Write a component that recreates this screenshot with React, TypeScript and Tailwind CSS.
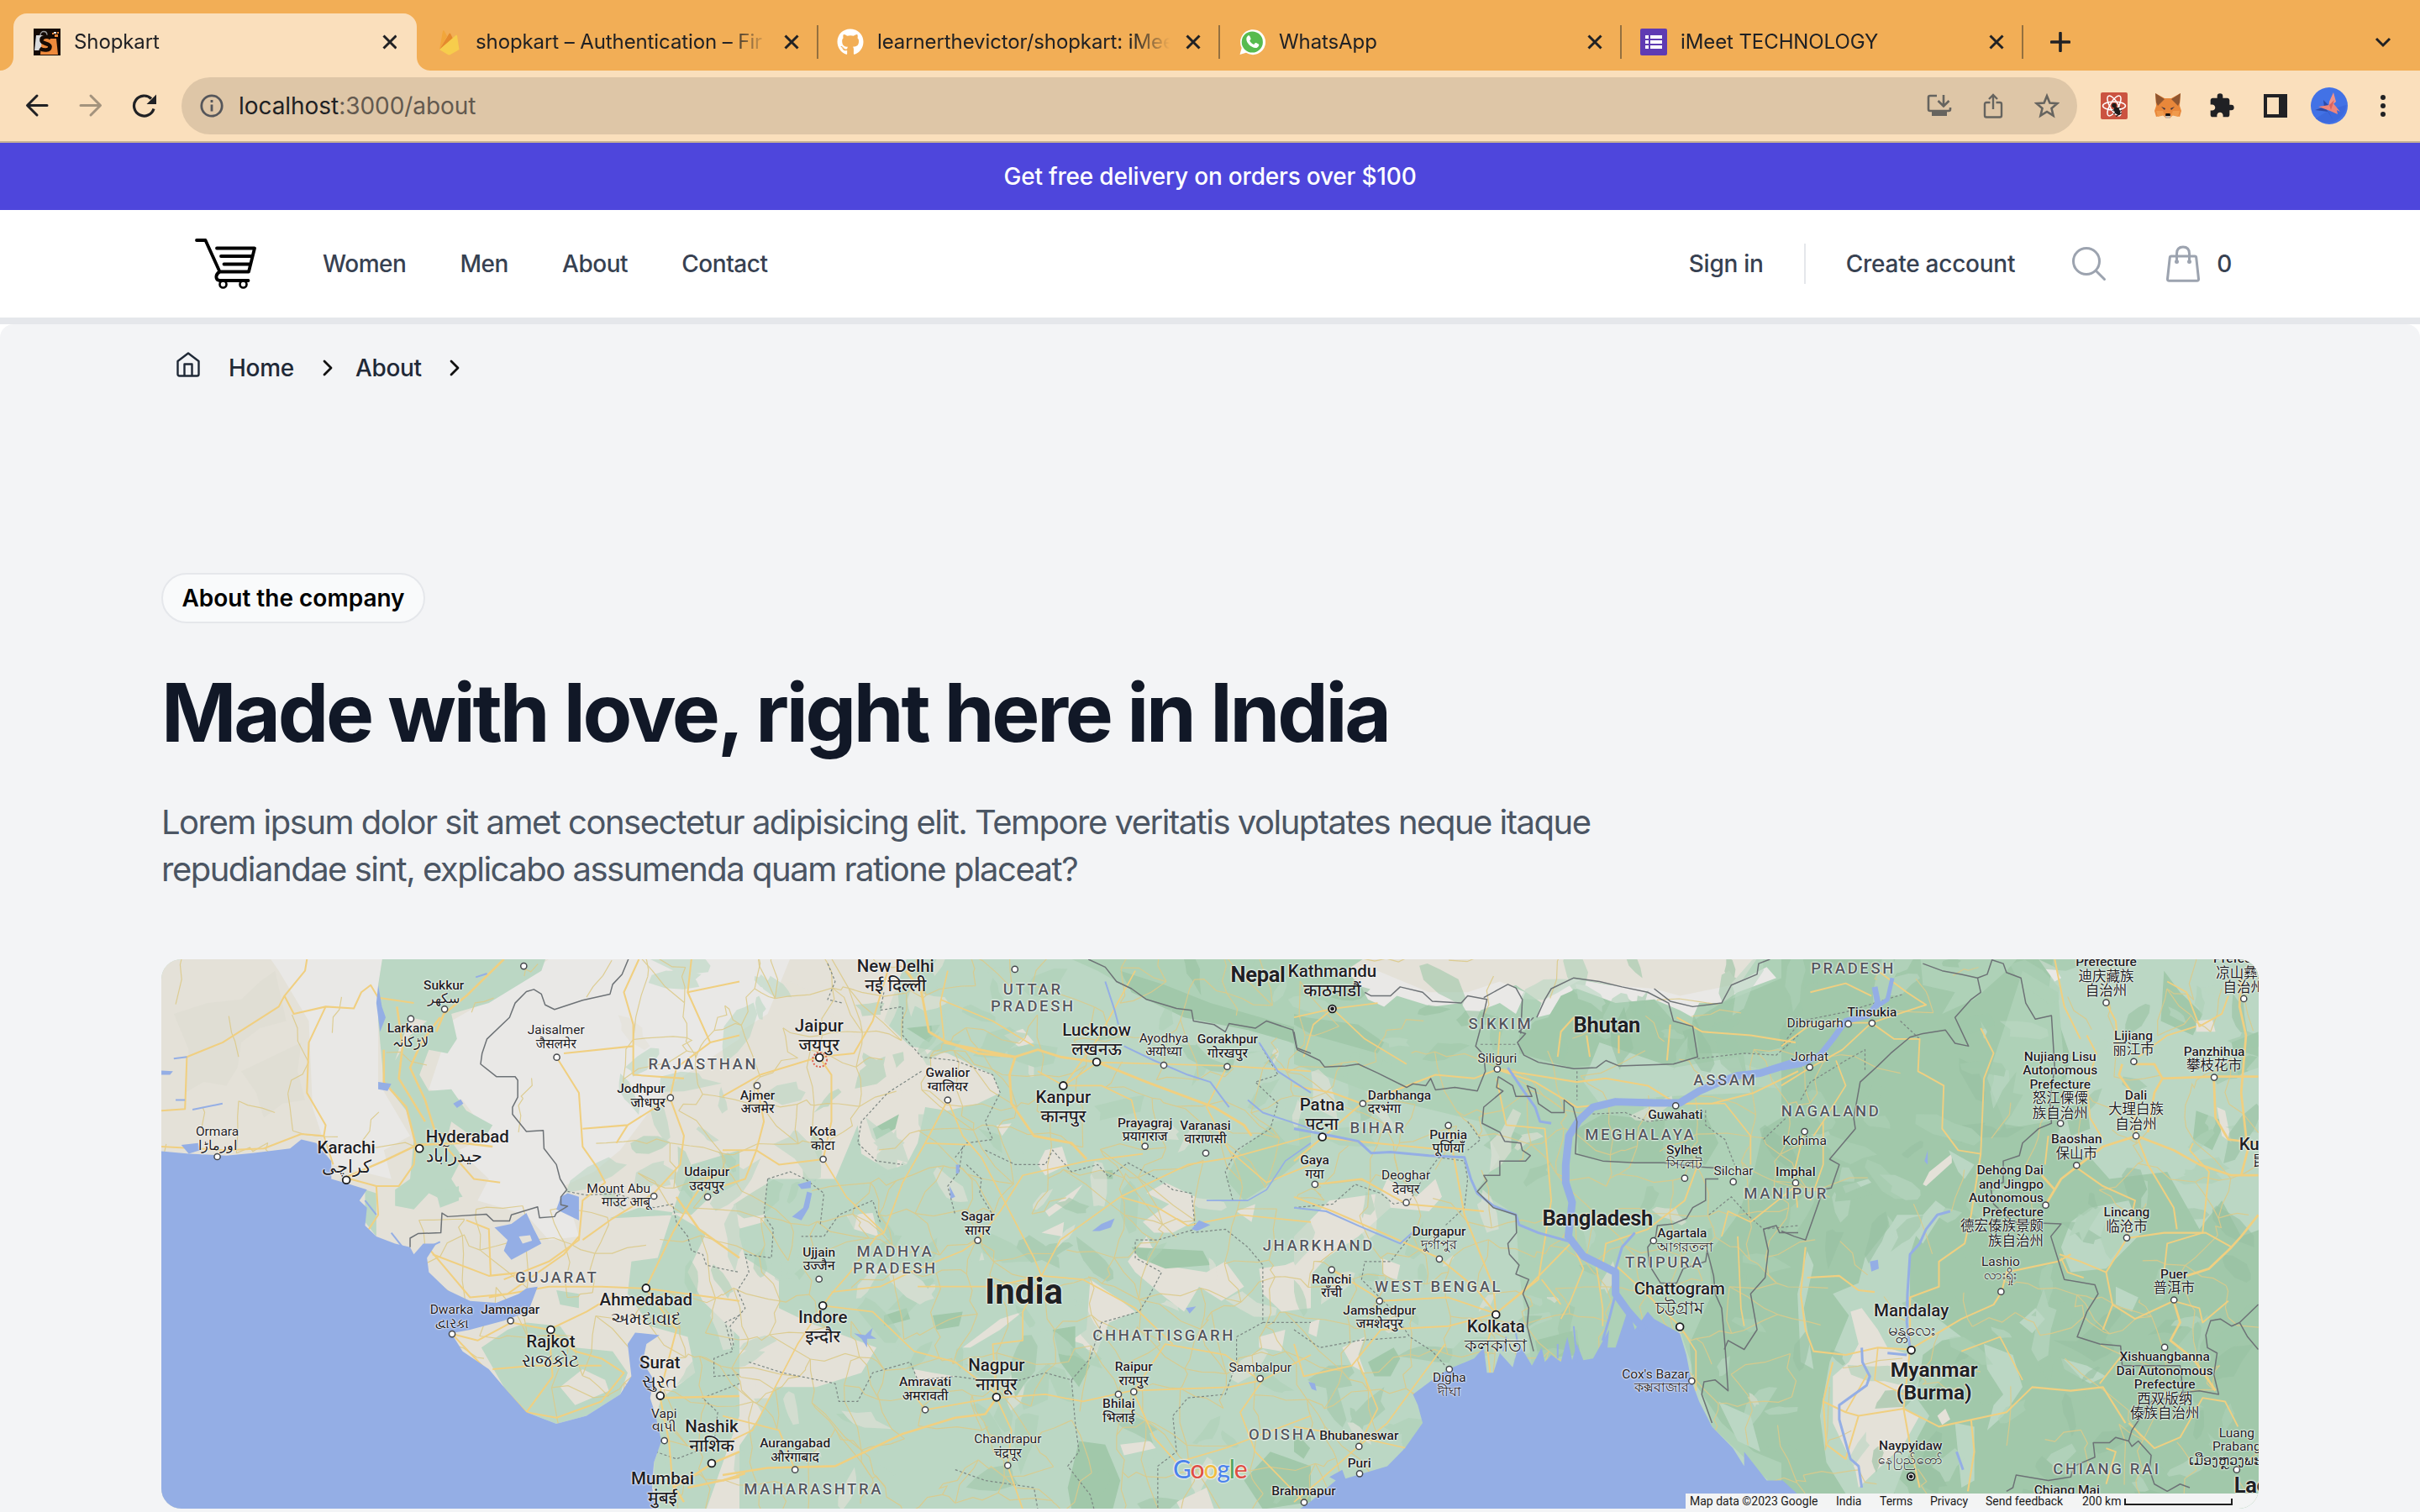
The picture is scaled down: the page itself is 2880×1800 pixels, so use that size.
import React from "react";
import { FaGithub } from "react-icons/fa";

/* ---------------------------------------------------------------- chrome */

const CloseIcon = () => (
  <svg className="size-[18px] shrink-0" viewBox="0 0 18 18" fill="none" stroke="#202124" strokeWidth="3">
    <path d="M1.500 1.500l15 15M16.500 1.500l-15 15" />
  </svg>
);

const ShopFavicon = () => (
  <svg className="size-8" viewBox="0 0 32 32">
    <rect width="32" height="32" fill="#150b05" />
    <path d="M3 8h16l-1 18H1z" fill="#d9dbdd" />
    <path d="M8 8c0-6 8-6 8 0" fill="none" stroke="#9b9b9b" strokeWidth="1.400" />
    <path d="M10 12h17l2 19H8z" fill="#ee8a3c" />
    <path d="M20.500 11.500c-4-3-12-2-11 3 1 4 10 3 10 7 0 5-8 5-12 2" fill="none" stroke="#150b05" strokeWidth="4.600" />
    <path d="M25 7h4v3h-4zM22 5h2v2h-2zM28 4h2v2h-2z" fill="#ee8a3c" />
    <path d="M24 4h3v2h-3z" fill="#eee" />
  </svg>
);

const FirebaseIcon = () => (
  <svg className="size-8" viewBox="0 0 32 32">
    <path d="M5 25L9 3c.2-1 1.300-1 1.700-.3L14 9z" fill="#f2a63a" />
    <path d="M5 25L16.500 6c.4-.7 1.200-.7 1.600 0L21 12z" fill="#e58a2d" />
    <path d="M5 25L24.500 8c.6-.5 1.400-.2 1.500.6L28.500 25 18 31q-1.500.8-3 0z" fill="#f7cd4c" />
  </svg>
);

const WhatsAppIcon = () => (
  <svg className="size-8" viewBox="0 0 32 32">
    <path d="M1.500 31l2.200-8A15 15 0 1 1 9 28.800z" fill="#fff" />
    <circle cx="16.300" cy="16" r="12.600" fill="#57bb4f" />
    <path
      d="M11.200 8.500c.6-.5 1.600-.5 2 .3l1.300 3c.2.6 0 1-.4 1.500l-.9 1.100c1.200 2.200 2.900 3.700 5 4.600l1.500-1.700c.4-.4.8-.4 1.300-.2l2.700 1.300c.6.3.7.8.5 1.500-.5 1.900-2.200 3.100-4 3.100-5.600-.5-10.600-5.800-10.900-10.300 0-1.700.7-3.100 1.900-4.200z"
      fill="#fff"
    />
  </svg>
);

const FormsIcon = () => (
  <svg className="size-8" viewBox="0 0 32 32">
    <rect width="32" height="32" rx="2" fill="#5f3bb3" />
    <path d="M6 8h4v4H6zM12 8h14v4H12zM6 14h4v4H6zM12 14h14v4H12zM6 20h4v4H6zM12 20h14v4H12z" fill="#fff" />
  </svg>
);

type TabProps = { icon: React.ReactNode; title: string; active?: boolean; divider?: boolean };

function Tab({ icon, title, active, divider }: TabProps) {
  return (
    <div
      className={
        "relative flex h-[68px] w-[478px] shrink-0 items-center pl-6 " +
        (active ? "rounded-t-[16px] bg-[#fadfbc]" : "")
      }
    >
      {active && (
        <>
          <svg className="absolute bottom-0 -left-4 size-4" viewBox="0 0 16 16">
            <path d="M16 0v16H0A16 16 0 0 0 16 0z" fill="#fadfbc" />
          </svg>
          <div className="absolute top-0 -right-0.5 h-full w-6 rounded-tr-[16px] bg-[#fadfbc]" />
          <svg className="absolute bottom-0 -right-[18px] size-4" viewBox="0 0 16 16">
            <path d="M0 0v16h16A16 16 0 0 1 0 0z" fill="#fadfbc" />
          </svg>
        </>
      )}
      <div className="size-8 shrink-0">{icon}</div>
      <div className="ml-4 w-[350px] overflow-hidden text-[24px] leading-8 tracking-[-0.1px] whitespace-nowrap text-[#202124] [mask-image:linear-gradient(to_right,#000_302px,transparent_348px)]">
        {title}
      </div>
      <div className="ml-[17px] flex">
        <CloseIcon />
      </div>
      {divider && <div className="absolute top-[14px] right-[-2px] h-10 w-0.5 bg-[#94703f]" />}
    </div>
  );
}

const Cell = ({ children }: { children: React.ReactNode }) => (
  <div className="flex h-16 w-16 shrink-0 items-center justify-center">{children}</div>
);

function Browser() {
  return (
    <header className="shrink-0 bg-[#f2ae56] font-['Inter',sans-serif]">
      <div className="flex h-[84px] items-end pl-4">
        <Tab icon={<ShopFavicon />} title="Shopkart" active />
        <Tab icon={<FirebaseIcon />} title="shopkart – Authentication – Fir" divider />
        <Tab icon={<FaGithub className="size-8 text-white" />} title="learnerthevictor/shopkart: iMee" divider />
        <Tab icon={<WhatsAppIcon />} title="WhatsApp" divider />
        <Tab icon={<FormsIcon />} title="iMeet TECHNOLOGY" divider />
        <div className="flex h-[68px] flex-1 items-center justify-between pr-[34px] pl-[34px]">
          <svg className="size-6" viewBox="0 0 24 24" stroke="#202124" strokeWidth="3.600" strokeLinecap="round">
            <path d="M12 1.500v21M1.500 12h21" />
          </svg>
          <svg className="size-5" viewBox="0 0 20 20" fill="none" stroke="#202124" strokeWidth="3">
            <path d="M2 6l8 8 8-8" />
          </svg>
        </div>
      </div>
      <div className="flex h-[86px] items-center border-b-2 border-[#c6b195] bg-[#fadfbc] px-3">
        <Cell>
          <svg className="size-[30px]" viewBox="0 0 30 30" fill="none" stroke="#202124" strokeWidth="3" strokeLinecap="round" strokeLinejoin="round">
            <path d="M27 14.500H4M15 3L3.500 14.500 15 26" />
          </svg>
        </Cell>
        <Cell>
          <svg className="size-[30px]" viewBox="0 0 30 30" fill="none" stroke="#a3937d" strokeWidth="3" strokeLinecap="round" strokeLinejoin="round">
            <path d="M3 14.500h23M15 3l11.500 11.500L15 26" />
          </svg>
        </Cell>
        <Cell>
          <svg className="size-[30px]" viewBox="0 0 30 30" fill="none" stroke="#202124" strokeWidth="3.200">
            <path d="M26 18.500A12 12 0 1 1 23 6.500" />
            <path d="M29 1.500v11.500H17.500z" fill="#202124" stroke="none" />
          </svg>
        </Cell>
        <div className="ml-3 flex h-[68px] flex-1 items-center rounded-full bg-[#dec6a7] pr-1 pl-[22px]">
          <svg className="size-7" viewBox="0 0 28 28" fill="none" stroke="#55565a" strokeWidth="2.800">
            <circle cx="14" cy="14" r="12.200" />
            <path d="M14 12.500V20.500M14 7v3" />
          </svg>
          <div className="ml-[18px] flex-1 text-[28px] leading-9 tracking-[-0.05px] text-[#202124]">
            localhost<span className="text-[#62594f]">:3000/about</span>
          </div>
          <Cell>
            <svg className="size-[30px]" viewBox="0 0 30 30" fill="none" stroke="#66645f" strokeWidth="2.600">
              <path d="M12 3H4q-2 0-2 2v14q0 2 2 2h22q2 0 2-2v-2M20 2v13M13.500 9l6.500 6.500L26.500 9" />
              <path d="M6 22h18v5H6z" fill="#66645f" stroke="none" />
            </svg>
          </Cell>
          <Cell>
            <svg className="size-[30px]" viewBox="0 0 30 30" fill="none" stroke="#66645f" strokeWidth="2.400">
              <path d="M11.500 11H7q-2 0-2 2v13.500q0 2 2 2h16q2 0 2-2V13q0-2-2-2h-4.500M15 19V3M10 7l5-5 5 5" />
            </svg>
          </Cell>
          <Cell>
            <svg className="size-[30px]" viewBox="0 0 30 30" fill="none" stroke="#66645f" strokeWidth="2.600">
              <path d="M15 3.200l3.400 8.300 8.900.7-6.800 5.800 2.100 8.700-7.600-4.700-7.600 4.700 2.100-8.700L2.700 12.200l8.900-.7z" />
            </svg>
          </Cell>
        </div>
        <div className="ml-3 flex">
          <Cell>
            <svg className="size-8" viewBox="0 0 32 32" fill="none">
              <rect width="32" height="32" rx="2" fill="#cb5340" />
              <g stroke="#fff" strokeWidth="1.500">
                <ellipse cx="16" cy="16" rx="13.500" ry="5" />
                <ellipse cx="16" cy="16" rx="13.500" ry="5" transform="rotate(60 16 16)" />
                <ellipse cx="16" cy="16" rx="13.500" ry="5" transform="rotate(120 16 16)" />
              </g>
              <circle cx="16" cy="15.500" r="2.800" fill="#1d1a1a" />
              <ellipse cx="19.500" cy="22" rx="3.200" ry="5.200" transform="rotate(-30 19.500 22)" fill="#1d1a1a" />
              <path d="M14 21.500l10-4M15 25.500l10-4M18 28.500l7-4" stroke="#1d1a1a" strokeWidth="1.200" />
            </svg>
          </Cell>
          <Cell>
            <svg className="size-8" viewBox="0 0 32 32">
              <path d="M1 1l11 6h8l11-6-1 15 2 6-2 7-8-2-4 4h-4l-4-4-8 2-2-7 2-6z" fill="#e8873a" />
              <path d="M1 1l11 7-8 8-2-4zM31 1L20 8l8 8 2-4z" fill="#8f5630" />
              <path d="M8 17l5 2-1 2zM24 17l-5 2 1 2z" fill="#3a3340" />
              <path d="M2 22l8 0 2 5-8 2zM30 22h-8l-2 5 8 2z" fill="#f09a4c" />
              <path d="M12 27h8l-2 4h-4z" fill="#c9bbae" />
              <path d="M13.500 25h5l.5 3h-6z" fill="#16110f" />
            </svg>
          </Cell>
          <Cell>
            <svg className="size-8" viewBox="0 0 24 24" fill="#202124">
              <path d="M20.500 11H19V7c0-1.100-.9-2-2-2h-4V3.500a2.500 2.500 0 0 0-5 0V5H4c-1.100 0-1.990.9-1.990 2v3.800H3.500c1.490 0 2.700 1.210 2.700 2.700s-1.210 2.700-2.700 2.700H2V20c0 1.100.9 2 2 2h3.800v-1.500c0-1.490 1.210-2.700 2.700-2.700s2.700 1.210 2.700 2.700V22H17c1.100 0 2-.9 2-2v-4h1.500a2.500 2.500 0 0 0 0-5z" />
            </svg>
          </Cell>
          <Cell>
            <div className="h-7 w-7 border-4 border-r-[10px] border-[#202124]" />
          </Cell>
          <Cell>
            <svg className="size-11" viewBox="0 0 44 44">
              <circle cx="22" cy="22" r="22" fill="#4272e6" />
              <path d="M22 27l20-6a22 22 0 0 1-36 16z" fill="#3c69dd" />
              <path d="M5 27l12-4 9 15-5-9zM15 15l6 6-5 3z" fill="#2c4aa8" />
              <path d="M27 6l3 11-9 8 1-8z" fill="#f0938a" />
              <path d="M9 23l13-2 4-3 9 11-4-2 1 5-9-4z" fill="#ee857b" />
              <path d="M22 21l6-6-4 12z" fill="#d9635f" />
            </svg>
          </Cell>
          <Cell>
            <div className="flex flex-col gap-1">
              <i className="size-1.5 rounded-full bg-[#202124]" />
              <i className="size-1.5 rounded-full bg-[#202124]" />
              <i className="size-1.5 rounded-full bg-[#202124]" />
            </div>
          </Cell>
        </div>
      </div>
    </header>
  );
}

/* ------------------------------------------------------------------- map */

/* The map is drawn in four sheets, west to east, each with its own origin and scale. */
type Sheet = "A" | "B" | "C" | "D";
const SHEETS: Record<Sheet, { ox: number; sx: number }> = {
  A: { ox: -12, sx: 1 / 2.24 },
  B: { ox: 668, sx: 1 / 2.24 },
  C: { ox: 1348, sx: 1 / 2.6133 },
  D: { ox: 1928, sx: 1 / 2.6133 },
};
const SY = 1 / 2.34;
const px = (s: Sheet, x: number) => SHEETS[s].ox + x * SHEETS[s].sx;
const py = (y: number) => y * SY - 12;
const tf = (s: Sheet) => `translate(${SHEETS[s].ox} -12) scale(${SHEETS[s].sx} ${SY})`;

const CREAM = "#e4e1d8";
const SAND = "#e9e8e6";
const LIGHT = "#bbd7c4";
const MID = "#aed1b7";
const DARK = "#a1c8aa";
const WATER = "#94aee5";

const LAND: [Sheet, string, string][] = [
  ["A", CREAM, "0,0 1568,0 1568,1568 0,1568"],
  ["B", CREAM, "0,0 500,0 430,200 500,270 600,290 720,350 740,400 680,430 600,450 540,440 520,540 490,600 440,615 370,570 360,490 300,640 120,640 110,760 40,780 60,860 150,920 150,1000 230,1040 410,1110 370,1180 250,1220 140,1220 100,1300 0,1450"],
  ["A", SAND, "300,0 620,0 605,100 605,370 690,520 620,560 640,640 480,600 430,440 420,200 340,60"],
  ["A", SAND, "900,140 1060,28 1568,0 1568,250 1380,380 1250,560 1180,620 1100,660 1140,800 1060,810 1000,740 870,700 900,640 820,560 900,520 830,420 740,390 800,200"],
  ["B", SAND, "0,0 190,0 120,180 0,260"],
  ["A", "#e0ded4", "60,180 150,150 240,140 290,90 330,60 345,130 360,200 290,220 240,260 230,330 200,380 140,370 90,400 100,280"],
  ["A", "#e0ded4", "240,340 300,310 400,260 390,340 410,420 350,430 300,470 280,400"],
  ["A", LIGHT, "620,0 1060,0 1040,60 900,150 800,180 815,250 790,290 740,280 715,350 740,395 800,390 840,450 910,490 880,540 800,480 790,520 830,580 800,640 830,690 780,700 740,680 700,725 650,715 650,670 690,640 700,530 680,450 620,370 605,200 605,100"],
  ["A", CREAM, "690,190 735,200 690,240 650,310"],
  ["A", LIGHT, "570,670 600,680 600,800 570,760"],
  ["A", LIGHT, "760,680 820,660 820,700 770,720"],
  ["A", LIGHT, "880,1110 950,1060 1000,1040 1090,1050 1130,1110 1230,1120 1270,1180 1250,1240 1160,1300 1080,1322 1000,1290 940,1220"],
  ["A", CREAM, "1090,1220 1150,1170 1210,1200 1220,1230 1130,1270"],
  ["A", LIGHT, "1220,750 1300,720 1440,740 1480,700 1568,650 1568,560 1440,600 1400,700 1350,860 1280,870 1270,960 1330,1050 1430,1080 1450,1180 1360,1250 1345,1300 1360,1370 1340,1430 1340,1560 1480,1560 1568,1300 1568,1080 1470,980 1430,900 1480,790 1400,740"],
  ["A", LIGHT, "1080,950 1140,960 1140,1000 1090,990"],
  ["B", CREAM, "860,560 905,550 920,600 860,630 840,600"],
  ["B", CREAM, "750,240 800,222 830,260 790,272"],
  ["B", CREAM, "860,730 960,655 930,700 870,745"],
  ["B", CREAM, "850,790 910,760 905,800"],
  ["B", CREAM, "730,490 770,485 745,520"],
  ["B", CREAM, "1130,680 1180,650 1260,690 1255,760 1200,790 1150,790 1120,760 1190,710"],
  ["B", CREAM, "1080,870 1130,800 1170,880 1290,900 1340,870 1390,940 1330,980 1270,940 1230,1010 1180,970 1100,900"],
  ["B", CREAM, "1430,890 1500,880 1568,850 1568,1000 1490,1010 1440,960"],
  ["B", CREAM, "980,920 1050,970 1100,1010 1030,1040 990,1140 960,1100 930,1090 970,1060"],
  ["B", CREAM, "640,1110 740,1030 800,1010 740,1060 660,1110"],
  ["B", CREAM, "330,740 400,735 415,800 350,780"],
  ["B", CREAM, "1370,730 1420,710 1410,760"],
  ["B", CREAM, "1060,1380 1140,1370 1155,1390 1070,1410"],
  ["B", CREAM, "1210,1540 1290,1500 1310,1560 1220,1560"],
  ["B", CREAM, "510,1170 560,1180 620,1190 520,1220"],
  ["B", CREAM, "1430,1080 1500,1060 1490,1120 1430,1110"],
  ["B", MID, "870,0 1568,0 1568,290 1440,220 1300,190 1200,170 1100,120 1000,60"],
  ["B", DARK, "1060,60 1180,100 1300,150 1568,230 1568,275 1400,225 1230,190 1090,120"],
  ["B", DARK, "880,1060 940,1050 940,1120 980,1160 950,1220 900,1150"],
  ["B", DARK, "430,1020 490,1000 500,1030 430,1050"],
  ["B", DARK, "560,1020 640,1010 630,1050 570,1060"],
  ["B", DARK, "1090,830 1280,840 1300,880 1180,890 1110,860"],
  ["B", DARK, "920,1500 950,1370 1020,1380 1060,1480 1040,1560 930,1560"],
  ["B", DARK, "1390,1480 1460,1400 1568,1440 1568,1540 1440,1560"],
  ["B", DARK, "400,500 470,460 460,500 410,530"],
  ["B", DARK, "980,620 1040,615 1040,640 990,640"],
  ["B", MID, "1470,480 1568,470 1568,560 1480,640 1390,700 1340,640 1380,560"],
  ["B", DARK, "490,220 580,210 550,260"],
  ["C", MID, "0,0 1568,0 1568,1560 1300,1330 1200,1060 1000,1140 740,1160 700,900 690,740 570,670 640,580 580,480 300,420 0,320"],
  ["C", CREAM, "260,0 1460,0 1360,130 1200,140 1110,120 870,80 770,150 690,100 590,130 450,150 330,100 240,130 160,60"],
  ["C", SAND, "200,90 260,60 340,90 420,120 540,120 640,90 720,120 690,180 640,150 580,170 560,210 520,150 430,160 320,130 280,160 230,140"],
  ["C", SAND, "770,150 860,80 980,100 1120,110 1200,130 1360,100 1470,50 1500,80 1380,120 1330,150 1260,150 1240,190 1200,170 1120,140 1030,160 960,150 870,110 800,180 755,190"],
  ["C", DARK, "750,200 790,190 830,130 880,110 1000,150 1120,140 1180,200 1240,215 1250,300 1180,320 970,320 860,330 700,290 700,240"],
  ["C", DARK, "1240,200 1330,150 1440,110 1568,60 1568,260 1450,290 1260,290 1250,210"],
  ["C", DARK, "40,190 200,210 280,260 260,290 60,240 0,210 0,180"],
  ["C", DARK, "880,500 960,460 1060,470 1280,460 1320,540 1280,600 1150,595 960,590 885,570"],
  ["C", DARK, "1460,500 1568,440 1568,1450 1430,1400 1330,1320 1240,1200 1230,1100 1300,960 1290,850 1380,740 1430,620"],
  ["C", LIGHT, "1320,1260 1420,1300 1450,1400 1380,1370"],
  ["C", LIGHT, "950,260 1180,330 1380,300 1420,400 1150,410 950,430 900,370"],
  ["C", CREAM, "0,800 110,700 270,680 290,640 380,690 440,640 460,690 420,730 300,720 200,800 100,860 0,960"],
  ["C", CREAM, "50,1040 80,1030 70,1080 45,1070"],
  ["C", CREAM, "150,1110 220,1080 200,1130 220,1180 180,1160"],
  ["C", CREAM, "270,860 330,880 320,920 280,910"],
  ["C", DARK, "230,1150 310,1110 330,1140 300,1190 250,1190"],
  ["C", DARK, "750,1090 880,1060 890,1130 760,1140"],
  ["C", DARK, "0,1340 50,1390 30,1420 0,1400"],
  ["D", DARK, "0,0 1568,0 1568,1560 0,1560"],
  ["D", MID, "430,0 760,0 700,60 600,140 500,180 540,120 440,100"],
  ["D", LIGHT, "850,0 1490,0 1490,780 1430,800 1370,700 1300,780 1200,620 1020,640 960,580 870,560 860,460 900,300 830,120"],
  ["D", MID, "750,60 860,120 880,330 830,480 700,500 640,360 700,200"],
  ["D", DARK, "1190,60 1240,120 1310,180 1280,240 1180,200"],
  ["D", DARK, "1290,450 1380,480 1340,560 1280,530"],
  ["D", DARK, "1130,640 1200,680 1270,760 1240,790 1150,720"],
  ["D", DARK, "1400,260 1483,230 1483,330 1420,350"],
  ["D", DARK, "880,440 950,430 960,500 900,520"],
  ["D", CREAM, "1290,200 1340,195 1350,230 1290,230"],
  ["D", CREAM, "1355,440 1380,450 1400,540 1370,520"],
  ["D", SAND, "800,28 850,50 870,80 850,90"],
  ["D", CREAM, "440,655 460,620 530,570 530,595 450,660"],
  ["D", LIGHT, "160,960 240,930 260,860 340,770 360,740 440,740 400,850 400,970 560,1080 500,1090 440,1130 420,1250 460,1300 400,1400 330,1560 230,1560 140,1430 120,1300 150,1150 210,1020"],
  ["D", LIGHT, "80,840 100,880 70,1000 100,1170 60,1150 50,960"],
  ["D", LIGHT, "520,560 600,600 570,640 550,620"],
  ["D", LIGHT, "630,1100 720,1130 750,1220 690,1300 640,1340 660,1270 690,1240 640,1170"],
  ["D", LIGHT, "740,1040 790,1000 820,1030 780,1070"],
  ["D", LIGHT, "540,1320 600,1330 600,1480 560,1500"],
  ["D", LIGHT, "190,660 270,640 280,650 200,680"],
  ["D", LIGHT, "620,200 640,230 630,250"],
  ["D", LIGHT, "900,760 960,720 1080,700 1120,790 1010,890 900,900 870,830"],
  ["D", LIGHT, "1040,940 1110,970 1090,1010 1040,990"],
  ["D", LIGHT, "400,780 480,700 510,720 440,820"],
  ["D", LIGHT, "870,1140 950,1160 1010,1190 960,1210 880,1170"],
  ["D", CREAM, "215,1010 250,1000 300,1060 330,1110 400,1130 380,1280 430,1300 380,1380 240,1500 230,1450 160,1320 160,1190 210,1150 240,1100"],
  ["D", CREAM, "485,1300 510,1280 525,1310 500,1325"],
];

const SEA: [Sheet, string][] = [
  ["A", "0,560 100,570 200,575 270,568 370,555 400,530 440,540 480,590 480,640 530,655 575,670 555,700 575,720 570,770 600,800 650,820 690,830 700,850 725,820 760,820 735,860 740,900 790,950 850,980 920,985 980,960 1000,945 1030,940 1005,1010 940,1035 850,1060 800,1070 830,1120 900,1170 940,1220 1000,1290 1080,1322 1160,1300 1250,1240 1280,1190 1270,1100 1290,1068 1355,1075 1320,1100 1310,1150 1340,1200 1330,1250 1345,1300 1360,1370 1340,1430 1335,1500 1350,1570 0,1570"],
  ["A", "915,775 960,765 1000,735 1020,780 1040,820 960,865 940,840 950,810"],
  ["A", "1092,690 1110,680 1140,690 1140,755 1080,725"],
  ["A", "605,100 615,160 625,190 610,230 600,150"],
  ["A", "605,370 640,375 630,395 605,390"],
  ["A", "805,430 825,418 832,430 815,442"],
  ["A", "27,338 58,340 50,350 27,350"],
  ["A", "80,545 125,540 130,560 100,570"],
  ["B", "225,675 238,680 230,720 210,755 185,745 215,720"],
  ["B", "200,655 235,645 235,665 210,668"],
  ["B", "350,1070 380,1075 400,1055 395,1075 410,1085 385,1085 385,1110 370,1085"],
  ["B", "985,785 1010,765 1045,750 1035,775 1005,785"],
  ["B", "1250,780 1270,755 1300,768 1265,785"],
  ["B", "605,660 620,690 608,695"],
  ["B", "622,600 632,600 630,625 622,625"],
  ["B", "1235,1000 1262,995 1245,1015"],
  ["C", "0,1570 50,1540 130,1480 110,1470 150,1450 160,1475 290,1440 345,1390 400,1320 385,1270 370,1240 430,1200 480,1170 560,1140 590,1110 600,1180 620,1180 640,1125 680,1165 700,1100 740,1160 770,1110 780,1150 800,1130 830,1150 850,1080 865,1145 880,1100 900,1145 930,1140 980,1060 975,1110 1000,1110 1040,1000 1060,1060 1100,1010 1120,1030 1200,1070 1220,1130 1235,1200 1260,1260 1300,1330 1365,1390 1400,1440 1400,1400 1470,1480 1520,1480 1568,1520 1568,1570"],
  ["C", "45,1205 65,1210 70,1230 55,1225"],
  ["D", "0,1480 40,1510 60,1560 0,1560"],
  ["D", "275,870 300,865 303,890 280,898"],
  ["D", "445,590 455,560 455,600"],
];

const RIVERS: [Sheet, number, string][] = [
  ["C", 9, "1568,312 1450,345 1380,352 1320,372 1260,395 1200,428 1120,428 1000,425 930,440 885,478 855,520 845,600 845,650 865,705 853,800 900,855 1000,900 1000,960 1040,1010 1090,1060"],
  ["C", 3, "0,500 90,515 200,535 240,568 300,565 420,575 530,580 550,640 570,680 620,715 690,740 700,768 760,790 860,815"],
  ["C", 3, "665,330 710,390 750,440 765,480 800,485"],
  ["C", 2, "0,720 100,730 200,770 330,820 380,780"],
  ["C", 3, "1000,960 980,1030 960,1090"],
  ["C", 3, "1000,890 1020,830 1060,790"],
  ["C", 2, "880,1150 870,1050 M 820,1100 820,1140 M 650,1120 660,1080 M 700,1120 690,1070"],
  ["D", 7, "0,330 60,320 120,295 160,250 200,200 270,185 300,150 290,105"],
  ["D", 5, "280,170 330,140 345,80"],
  ["D", 3, "525,730 485,740 450,780 430,820 400,850 392,960 390,1040 400,1110"],
  ["D", 3, "390,1130 330,1125 M 250,1110 252,1150 275,1190 265,1215 180,1270 180,1310 205,1390 215,1420 240,1440 250,1500"],
  ["D", 3, "545,1400 565,1450"],
  ["B", 2, "1020,90 1045,170 1055,210 M 1070,270 1150,310 1240,350 1300,370 1350,440"],
  ["B", 2, "1400,420 1440,455 1568,500 M 1430,260 1480,340 1568,400"],
  ["B", 1.6, "1290,700 1400,700 1450,670 1500,590 1568,540"],
  ["A", 2, "110,447 190,430 M 60,305 95,300 M 65,420 90,420 M 865,78 895,68"],
  ["A", 2, "570,700 600,740 M 640,790 670,830 M 720,840 770,815"],
];

const BORDERS: [Sheet, string][] = [
  ["A", "1275,20 1255,70 1230,98 1223,125 1150,142 1075,168 1050,155 1040,125 1020,112 1000,118 970,150 955,190 895,250 882,290 878,320 920,355 970,355 977,365 977,412 963,440 963,460 1000,508 1045,505 1047,555 1080,600 1090,640 1108,670 1092,690 1092,712 1110,716 1080,735 1075,745 1035,748 1030,718 960,740 955,757 912,757 893,738 790,745 775,735 772,790 712,792 690,805 690,830"],
  ["B", "975,28 1020,50 1050,90 1090,110 1130,140 1210,165 1250,170 1255,200 1310,210 1340,230 1350,207 1420,220 1450,200 1520,225 1530,275 1568,290"],
  ["C", "0,230 10,280 80,310 95,328 160,325 200,320 260,345 350,385 370,375 410,380 425,360 440,392 500,385 570,395 595,340 590,295 565,270 580,220 600,140 540,130 520,150 430,145 400,120 330,105 300,130 240,130 220,120"],
  ["C", "755,190 780,140 800,110 870,80 950,90 1020,105 1100,120 1165,150 1180,200 1240,215 1255,300 1180,320 1010,325 970,310 940,330 870,333 760,315 715,295 695,260 720,235 700,230 745,190"],
  ["C", "590,135 630,115 665,98 690,108 710,140 705,235"],
  ["C", "1120,110 1170,145 1240,160 1330,150 1360,100 1440,70 1445,40 1480,28"],
  ["C", "635,355 630,385 650,395 590,440 585,485 640,510 655,535 705,540 710,560 735,575 720,590 640,590 640,630 590,630 600,645 570,675 620,720 690,740 692,790 665,820 670,850 700,880 690,905 730,920 712,960 730,1000 725,1050 745,1120"],
  ["C", "635,355 680,380 690,410 740,410 725,380 750,390 760,430 800,455 840,455 840,420 868,440 880,480 875,570 960,590 1060,595 1150,595 1240,605 1320,610 1345,625"],
  ["C", "1320,640 1280,640 1280,700 1240,720 1220,750 1180,765 1130,770 1125,800 1100,830 1105,880 1140,930 1190,930 1210,890 1280,870 1285,840 1305,910 1310,960 1330,1000 1340,1100 1350,1230 1310,1200 1275,1205 1268,1240 1300,1320"],
  ["C", "1338,1115 1350,1090 1400,1115 1440,1060 1420,960 1465,915 1475,840 1460,780 1500,770 1510,790 1568,790"],
  ["D", "0,785 40,800 75,810 95,760 130,670 155,665 180,600 150,585 230,500 225,470 245,370 300,325 340,290 400,245 440,235 510,225 540,262 582,270 540,190 590,140 620,120 610,80 560,70 500,60 440,40"],
  ["D", "610,80 640,70 655,30 690,40 700,65 745,80 760,150 790,195 840,185 850,330 835,420 840,485 800,500 750,540 740,575 690,590 690,650 650,660 660,710 720,760 870,765 838,800 880,920 975,935 985,960 950,1010 920,1080 990,1100 1055,1105 1060,1160 1240,1160 1250,1240 1150,1260 1090,1340 1080,1370 1040,1360 1020,1375 970,1375 975,1415 910,1440 900,1470 830,1480 730,1465 720,1500 700,1510"],
  ["D", "1250,1235 1300,1230 1360,1240 1345,1185 1355,1125 1325,1110 1320,1075 1335,1035 1365,1030 1400,1050 1425,1040 1483,990 M 1425,1040 1450,1080 1483,1115"],
  ["D", "1080,1370 1090,1385 1110,1370 1150,1410 1145,1450 1160,1490 1200,1510 1240,1490 1270,1500"],
];

const DASHED: [Sheet, string][] = [
  ["A", "1110,675 1160,685 1240,680 1340,720 1390,710 1400,760 1430,800 1440,840 1470,850 1480,880 1520,890 1568,900"],
  ["A", "1568,1020 1530,1040 1550,1120 1500,1140 1500,1190 1568,1185 M 1568,1210 1470,1250 1510,1290 1500,1380 1400,1420 1345,1400"],
  ["B", "280,40 300,90 280,140 320,150 M 430,120 420,170 480,160 480,240 530,300 620,310 720,350 740,400 700,480 720,530 650,540 620,580"],
  ["B", "530,340 440,400 370,480 360,540 410,590 480,600"],
  ["B", "640,550 630,620 600,660 620,740 M 650,600 690,640 685,680 720,740 M 700,560 780,600 860,600 880,560 930,620 1000,600 1030,635 1080,595 1160,640 1200,670 1250,680 1260,780 1160,810 1100,810"],
  ["B", "420,760 400,700 310,740 270,800 210,800 M 120,640 180,620 220,640 270,680 260,770 M 120,640 110,740 135,780 130,860 60,850 70,900 40,950 60,1000 20,1050 30,1110"],
  ["B", "70,1150 160,1180 300,1210 310,1260 360,1260 400,1180 500,1150 520,1200 620,1190 760,1210 860,1180 930,1200 940,1320 950,1400 920,1440 980,1520 990,1560"],
  ["B", "930,1200 980,1140 1010,1040 1110,1010 1140,960 1170,900 1100,860 1100,810 M 1250,790 1340,780 1400,830 1440,880 1440,1040 1370,1080 1370,1150 1340,1240 1240,1250 1200,1300 1210,1400 1160,1440 1160,1560"],
  ["B", "1360,700 1340,620 1370,560 1460,500 1480,430 1420,370 1480,350 1430,260 M 620,1450 700,1480 830,1500 840,1560 M 1440,1040 1568,1040"],
  ["C", "0,720 120,710 190,655 270,680 310,710 360,700 400,640 450,580 530,590 540,640 530,720 470,770 M 380,780 300,870 220,870 210,920 300,1000 360,1080 430,1120 480,1170"],
  ["C", "0,1060 80,1110 200,1090 350,1080 M 540,480 580,530 540,560 M 580,265 700,265 M 880,340 880,420 M 1255,305 1400,290 1500,295 1568,240"],
  ["C", "900,460 1030,455 1100,480 1200,470 1280,450 1280,490 1340,530 1370,600 M 1290,740 1360,690 1410,740 1460,780 1568,770 M 1460,530 1530,470"],
  ["D", "0,270 60,200 200,175 380,125 M 370,200 430,250 M 60,420 90,370 200,310 260,280 260,340"],
];

const ROADS: [Sheet, number, string][] = [
  ["A", 2.4, "27,450 90,445 95,300 190,260 340,160 355,130 410,60 415,28 M 355,130 380,180 465,160 540,165 560,120 585,100 605,135 700,150 M 465,160 420,260 415,400 465,490 460,520 400,515 300,555 200,560 27,550 M 460,520 485,600"],
  ["A", 3, "520,635 620,590 710,545 830,540 910,550 M 620,280 620,370 680,440 705,545 M 770,190 720,260 690,330 730,420 760,520 M 655,160 670,270 660,360 730,480 M 940,28 840,130 780,180 760,230"],
  ["A", 2.4, "530,640 600,660 660,660 700,600 705,545 M 760,520 860,640 930,650 M 600,660 605,740 580,780 M 745,840 850,970 950,960 1100,850 1140,800 M 840,755 900,780 905,910 M 750,850 900,910 990,900"],
  ["A", 2.4, "1080,300 1140,400 1150,550 1190,610 1210,650 1150,700 1140,810 1060,870 940,920 M 1300,28 1260,120 1285,210 1285,270 1100,290 M 1285,270 1285,350 1420,360 M 1440,28 1430,120 1490,260 1400,330 1383,415 1420,520 1410,600 1340,680 1230,750 1150,810"],
  ["A", 2.4, "1383,415 1270,490 1150,500 M 1270,490 1240,540 M 1430,120 1568,90 M 1490,260 1568,240 M 1318,945 1200,940 1060,940 900,970 M 1318,945 1390,790 1440,700 1480,640 1568,600 M 1318,945 1568,980 M 1318,945 1400,1060 1370,1180 1355,1240 1380,1370 1390,1490"],
  ["A", 2.4, "802,1072 870,1090 960,1040 1060,1060 1160,1010 1240,960 M 802,1072 900,1180 1000,1290 1080,1305 1200,1260 1260,1180 1200,1140 1130,1120 1060,1060 M 1060,1060 1070,1190 1000,1290 M 910,1170 1020,1160 1200,1160"],
  ["A", 3, "1390,1500 1440,1470 1500,1430 1568,1400 M 1390,1490 1420,1540 M 1430,1500 1568,1470 M 1357,1250 1568,1245 M 1400,690 1460,780 1568,860"],
  ["B", 3.4, "490,60 530,120 550,230 590,255 680,290 780,300 M 780,300 765,350 770,430 830,520 930,540 970,585 M 590,260 780,300 840,280 900,300 1000,315 1130,370 1310,440 1390,490 1410,520"],
  ["B", 3, "0,1465 120,1445 300,1440 480,1350 620,1305 700,1295 730,1250 M 0,1480 60,1460"],
  ["B", 2.4, "257,300 350,290 400,200 440,60 M 257,300 100,350 0,410 M 92,380 110,480 90,560 150,600 268,585 290,480 290,350 257,300 M 0,560 90,560 60,640 0,660"],
  ["B", 2, "268,585 330,690 430,790 410,800 340,900 290,960 267,993 M 267,993 400,1010 510,1120 620,1150 730,1240 M 267,993 200,1100 150,1200 80,1340 0,1380 M 290,955 420,940 500,900 640,840 680,810 M 680,810 740,730 800,630 970,590 1120,570"],
  ["B", 2, "600,420 640,520 690,580 760,720 830,860 850,910 M 850,910 720,940 520,940 M 850,910 960,920 1100,1000 1200,1100 M 730,1250 860,1240 960,1260 1090,1230 1350,1220 1440,1200 1568,1130 M 850,910 900,810 1060,690 1240,600 1360,580 1568,520"],
  ["B", 2, "600,420 540,540 480,650 430,790 M 540,540 660,545 M 600,60 580,150 590,250 M 580,140 720,200 830,270 M 1000,315 910,380 840,340 M 910,380 1010,380 1090,420 1120,550 M 1000,315 1175,320 1345,325 1568,340"],
  ["B", 2, "730,1250 720,1100 800,1090 800,1010 850,910 M 730,1250 770,1340 760,1440 800,1560 M 193,1450 150,1340 0,1300 M 540,1283 480,1200 M 540,1283 720,1250 M 1095,1233 1180,1100 1340,1130 1430,1200 M 1095,1233 1150,1360 1210,1430 1340,1390 1568,1300"],
  ["B", 2, "1060,690 1160,720 1240,770 1380,740 1568,760 M 910,380 1000,250 1100,60 M 1345,325 1290,440 1350,560 1450,650 1568,600 M 1440,1200 1380,1290 1420,1400 1550,1540"],
  ["C", 2.4, "0,590 88,525 210,430 440,350 560,360 632,335 M 0,380 120,400 210,430 M 88,525 250,540 480,560 M 65,655 210,640 350,710 480,720 590,730 M 0,690 120,730 300,800 450,860 560,940 628,1015 M 628,1015 620,940 530,740 480,495"],
  ["C", 2.2, "628,1015 480,1050 270,1060 180,1160 30,1190 0,1100 M 117,893 240,960 270,980 480,970 628,1015 M 628,1015 600,1100 610,1180 M 628,1015 740,930 860,820 960,880 970,820 1100,780 1215,700 1260,590 M 628,1015 760,920 800,700 780,500 660,490 630,360"],
  ["C", 2.4, "632,335 740,350 880,370 970,360 1100,380 1190,430 1300,430 1430,400 1568,340 M 632,335 750,370 880,440 990,430 1190,430 M 820,300 830,230 870,190 M 910,240 920,300 M 1010,240 1010,290 M 1170,210 1160,310 M 1190,190 1270,230 1420,240 1560,260"],
  ["C", 2, "940,880 960,1000 960,1050 M 830,1030 860,980 900,890 870,830 M 770,920 830,990 M 1000,880 1060,930 1200,1050 1250,1120 1250,1230 M 1380,800 1390,1000 1400,1050 M 1330,800 1350,730 1420,760 1560,660 M 1190,430 1340,430 1420,520 1420,600"],
  ["C", 2, "200,1385 290,1320 470,1100 M 200,1385 260,1280 200,1150 M 200,1385 80,1480 0,1540 M 0,1330 200,1360 350,1390 M 30,300 60,210 120,166 220,250 350,320 M 0,190 120,166 M 120,166 260,150 M 640,230 632,330"],
  ["D", 2.2, "0,270 90,210 210,205 280,205 450,155 390,120 300,60 M 90,120 200,95 280,130 M 280,205 350,250 430,250 425,340 505,380 500,500 550,560 620,570 630,360 660,290 620,220 M 0,380 90,330 190,280 280,205"],
  ["D", 2.4, "75,830 60,960 75,1060 100,1120 200,1130 300,1110 400,1115 M 80,915 180,910 240,950 290,955 M 400,1115 400,970 490,940 490,870 570,820 590,740 620,570 M 400,1115 560,1030 660,990 685,955 700,900 860,870 900,850"],
  ["D", 2.4, "400,1115 380,1280 240,1300 200,1290 130,1260 160,1150 M 380,1280 490,1330 700,1290 780,1220 900,1230 1000,1220 1070,1320 M 590,1310 600,1400 580,1510 M 130,1260 140,1380 200,1420 240,1300 M 380,1280 400,1380 430,1500"],
  ["D", 2, "100,520 130,480 200,380 170,310 M 70,510 40,620 50,720 M 130,480 130,600 90,700 M 270,1180 200,1290 M 300,1110 290,1200 380,1240 M 560,1120 680,1080 750,1200"],
  ["D", 3.2, "820,715 870,640 920,605 1000,550 1105,520 1220,560 1300,600 1400,630 1483,630 M 820,715 850,670 810,630 M 1105,520 1090,400 1050,350 1060,320 M 1140,510 1160,400 1185,360 1345,355 1483,355 M 1185,360 1160,320 1100,320 M 1345,360 1350,470 1390,530 1483,540"],
  ["D", 3.2, "1220,980 1240,1040 1210,1090 1280,1140 1320,1190 1350,1230 M 1483,740 1430,800 1400,830 1330,890 1260,910 M 1430,630 1450,560 1430,400 1445,240 1425,160 1430,60"],
  ["D", 2.4, "1105,520 1140,600 1220,720 1230,780 M 920,610 1000,660 1100,700 1090,740 1075,805 M 1075,805 1190,790 1320,790 1400,830 M 1075,805 1010,900 1030,990 1000,1060 M 1030,990 1100,1030 1220,980 M 1010,150 1040,200 1050,300 M 930,250 880,160 850,28"],
  ["D", 2.2, "865,850 930,870 1010,900 M 870,860 890,900 940,915 M 990,1210 1060,1130 M 1220,980 1300,1000 1310,1040 1390,980 M 1200,90 1260,120 1300,215 1370,180 1390,130 M 1080,1320 1160,1390 1240,1360 1310,1250 1380,1260 1420,1330 M 1010,1490 1040,1400 1010,1390"],
  ["D", 2.2, "1190,900 1200,820 1310,790 1330,620 1270,560 1280,540 M 830,520 820,600 M 950,240 980,290 950,380 960,470 1000,530 M 1110,300 1200,240 1290,215"],
];

const DOTS: [Sheet, number, number, 0 | 1 | 2][] = [
  ["A", 782, 167, 0], ["A", 692, 194, 0], ["A", 993, 47, 0], ["A", 1081, 301, 0], ["A", 1384, 414, 0],
  ["A", 520, 643, 1], ["A", 715, 555, 1], ["A", 176, 578, 0], ["A", 1340, 688, 0], ["A", 1483, 690, 0],
  ["A", 1319, 944, 1], ["A", 958, 1035, 0], ["A", 802, 1072, 0], ["A", 1065, 1060, 1], ["A", 1357, 1244, 1],
  ["A", 1368, 1369, 0], ["A", 1494, 1432, 1],
  ["B", 258, 302, 1], ["B", 779, 56, 0], ["B", 92, 380, 0], ["B", 600, 420, 0], ["B", 997, 314, 1],
  ["B", 908, 380, 1], ["B", 1176, 323, 0], ["B", 1345, 327, 0], ["B", 268, 585, 0], ["B", 1126, 549, 0],
  ["B", 1288, 568, 0], ["B", 680, 811, 0], ["B", 257, 919, 0], ["B", 267, 993, 1], ["B", 730, 1248, 1],
  ["B", 540, 1283, 0], ["B", 1055, 1240, 0], ["B", 1096, 1233, 0], ["B", 1433, 1196, 0], ["B", 193, 1450, 0],
  ["B", 760, 1438, 0], ["B", 1550, 1541, 0],
  ["C", 119, 166, 2], ["C", 632, 334, 0], ["C", 214, 430, 0], ["C", 88, 523, 1], ["C", 480, 491, 0],
  ["C", 65, 655, 0], ["C", 349, 706, 0], ["C", 452, 863, 0], ["C", 117, 893, 0], ["C", 266, 980, 0],
  ["C", 628, 1018, 1], ["C", 1187, 436, 0], ["C", 1215, 638, 0], ["C", 1366, 648, 0], ["C", 1560, 651, 0],
  ["C", 1118, 812, 0], ["C", 1200, 1052, 1], ["C", 1237, 1203, 0], ["C", 483, 1170, 0], ["C", 202, 1385, 0],
  ["C", 204, 1461, 0],
  ["D", 208, 208, 0], ["D", 282, 206, 0], ["D", 88, 329, 0], ["D", 72, 508, 0], ["D", 1010, 149, 0],
  ["D", 1438, 138, 0], ["D", 1096, 313, 0], ["D", 1346, 357, 0], ["D", 868, 485, 0], ["D", 1103, 520, 0],
  ["D", 918, 602, 0], ["D", 822, 713, 0], ["D", 1074, 804, 0], ["D", 683, 954, 0], ["D", 1221, 977, 0],
  ["D", 404, 1117, 1], ["D", 1192, 1109, 0], ["D", 403, 1469, 2], ["D", 1416, 1450, 0],
];

type Kind = "big" | "city" | "town" | "region" | "country" | "nation" | "myanmar";
const KIND: Record<Kind, string> = {
  big: "text-[20.5px] leading-[23px] font-medium",
  city: "text-[15.5px] leading-[16.5px] font-medium",
  town: "text-[15.5px] leading-[16.5px] font-normal",
  region: "text-[18.5px] leading-5 font-medium tracking-[2.6px] pl-[2px] text-[#54575e]",
  country: "text-[25.5px] leading-7 font-bold tracking-[-0.3px]",
  nation: "text-[42px] leading-[48px] font-bold",
  myanmar: "text-[24.5px] leading-[27px] font-bold",
};
const HALF: Record<Kind, number> = { big: 11.5, city: 8, town: 8, region: 10, country: 14, nation: 24, myanmar: 13.5 };

/* [sheet, centre x, centre y of the first line, kind, lines, alignment] */
const LABELS: [Sheet, number, number, Kind, string[], ("left" | "right")?][] = [
  ["A", 780, 100, "city", ["Sukkur", "سکھر"]],
  ["A", 691, 220, "city", ["Larkana", "لاڑکانہ"]],
  ["A", 1079, 225, "town", ["Jaisalmer", "जैसलमेर"]],
  ["A", 1469, 320, "region", ["RAJASTHAN"]],
  ["A", 1306, 389, "city", ["Jodhpur", "जोधपुर"], "right"],
  ["A", 176, 508, "town", ["Ormara", "اورماڑا"]],
  ["A", 520, 554, "big", ["Karachi", "کراچی"]],
  ["A", 843, 523, "big", ["Hyderabad", "حیدرآباد"], "left"],
  ["A", 1246, 666, "town", ["Mount Abu", "माउंट आबू"], "right"],
  ["A", 1481, 621, "city", ["Udaipur", "उदयपुर"]],
  ["A", 1079, 915, "region", ["GUJARAT"]],
  ["A", 1319, 977, "big", ["Ahmedabad", "અમદાવાદ"]],
  ["A", 801, 1005, "town", ["Dwarka", "દ્વારકા"]],
  ["A", 957, 1005, "city", ["Jamnagar"]],
  ["A", 1065, 1094, "big", ["Rajkot", "રાજકોટ"]],
  ["A", 1356, 1153, "big", ["Surat", "સુરત"]],
  ["A", 1367, 1293, "town", ["Vapi", "વાપી"]],
  ["A", 1494, 1330, "big", ["Nashik", "नाशिक"]],
  ["A", 1363, 1476, "big", ["Mumbai", "मुंबई"]],
  ["B", 461, 48, "big", ["New Delhi", "नई दिल्ली"]],
  ["B", 825, 112, "region", ["UTTAR", "PRADESH"]],
  ["B", 1427, 70, "country", ["Nepal"]],
  ["B", 257, 213, "big", ["Jaipur", "जयपुर"]],
  ["B", 93, 406, "city", ["Ajmer", "अजमेर"]],
  ["B", 600, 344, "city", ["Gwalior", "ग्वालियर"]],
  ["B", 997, 225, "big", ["Lucknow", "लखनऊ"]],
  ["B", 1176, 247, "town", ["Ayodhya", "अयोध्या"]],
  ["B", 1346, 251, "city", ["Gorakhpur", "गोरखपुर"]],
  ["B", 908, 413, "big", ["Kanpur", "कानपुर"]],
  ["B", 1126, 484, "city", ["Prayagraj", "प्रयागराज"]],
  ["B", 1287, 491, "city", ["Varanasi", "वाराणसी"]],
  ["B", 267, 508, "city", ["Kota", "कोटा"]],
  ["B", 680, 745, "city", ["Sagar", "सागर"]],
  ["B", 257, 844, "city", ["Ujjain", "उज्जैन"]],
  ["B", 458, 843, "region", ["MADHYA", "PRADESH"]],
  ["B", 803, 955, "nation", ["India"]],
  ["B", 267, 1027, "big", ["Indore", "इन्दौर"]],
  ["B", 1174, 1077, "region", ["CHHATTISGARH"]],
  ["B", 730, 1159, "big", ["Nagpur", "नागपूर"]],
  ["B", 1096, 1164, "city", ["Raipur", "रायपुर"]],
  ["B", 1433, 1165, "town", ["Sambalpur"]],
  ["B", 540, 1206, "city", ["Amravati", "अमरावती"]],
  ["B", 1056, 1266, "city", ["Bhilai", "भिलाई"]],
  ["B", 193, 1376, "city", ["Aurangabad", "औरंगाबाद"]],
  ["B", 760, 1365, "town", ["Chandrapur", "चंद्रपूर"]],
  ["B", 240, 1504, "region", ["MAHARASHTRA"]],
  ["C", 119, 62, "big", ["Kathmandu", "काठमाडौं"]],
  ["C", 640, 208, "region", ["SIKKIM"]],
  ["C", 973, 211, "country", ["Bhutan"]],
  ["C", 632, 304, "town", ["Siliguri"]],
  ["C", 1339, 366, "region", ["ASSAM"]],
  ["C", 328, 406, "city", ["Darbhanga", "दरभंगा"], "left"],
  ["C", 87, 434, "big", ["Patna", "पटना"]],
  ["C", 259, 498, "region", ["BIHAR"]],
  ["C", 480, 517, "city", ["Purnia", "पूर्णियाँ"]],
  ["C", 1186, 462, "city", ["Guwahati"]],
  ["C", 1075, 516, "region", ["MEGHALAYA"]],
  ["C", 1214, 560, "city", ["Sylhet", "সিলেট"]],
  ["C", 1367, 618, "town", ["Silchar"]],
  ["C", 64, 588, "city", ["Gaya", "गया"]],
  ["C", 348, 630, "town", ["Deoghar", "देवघर"]],
  ["C", 944, 748, "country", ["Bangladesh"]],
  ["C", 451, 786, "city", ["Durgapur", "দুর্গাপুর"]],
  ["C", 74, 826, "region", ["JHARKHAND"]],
  ["C", 1217, 792, "city", ["Agartala", "আগরতলা"], "left"],
  ["C", 1150, 873, "region", ["TRIPURA"]],
  ["C", 117, 919, "city", ["Ranchi", "राँची"]],
  ["C", 447, 940, "region", ["WEST BENGAL"]],
  ["C", 1199, 947, "big", ["Chattogram", "চট্টগ্রাম"]],
  ["C", 266, 1006, "city", ["Jamshedpur", "जमशेदपुर"]],
  ["C", 628, 1052, "big", ["Kolkata", "কলকাতা"]],
  ["C", 483, 1194, "town", ["Digha", "দীঘা"]],
  ["C", 1124, 1183, "town", ["Cox's Bazar", "কক্সবাজার"], "right"],
  ["C", -36, 1353, "region", ["ODISHA"]],
  ["C", 202, 1355, "city", ["Bhubaneswar"]],
  ["C", 203, 1431, "city", ["Puri"]],
  ["C", 30, 1510, "city", ["Brahmapur"]],
  ["D", 221, 53, "region", ["PRADESH"]],
  ["D", 105, 207, "town", ["Dibrugarh"]],
  ["D", 282, 175, "city", ["Tinsukia"]],
  ["D", 88, 299, "town", ["Jorhat"]],
  ["D", 152, 452, "region", ["NAGALAND"]],
  ["D", 72, 534, "town", ["Kohima"]],
  ["D", 44, 621, "city", ["Imphal"]],
  ["D", 12, 682, "region", ["MANIPUR"]],
  ["D", 1010, 36, "city", ["Prefecture", "迪庆藏族", "自治州"]],
  ["D", 1438, 26, "city", ["Prefecture", "凉山彝族", "自治州"]],
  ["D", 1095, 240, "city", ["Lijiang", "丽江市"]],
  ["D", 1346, 285, "city", ["Panzhihua", "攀枝花市"]],
  ["D", 867, 299, "city", ["Nujiang Lisu", "Autonomous", "Prefecture", "怒江傈僳", "族自治州"]],
  ["D", 1103, 407, "city", ["Dali", "大理白族", "自治州"]],
  ["D", 918, 530, "city", ["Baoshan", "保山市"]],
  ["D", 1530, 545, "big", ["Kunming", "昆明市"]],
  ["D", 686, 616, "city", ["Dehong Dai", "and Jingpo", "Autonomous", "Prefecture", "德宏傣族景颇", "族自治州"], "right"],
  ["D", 1074, 733, "city", ["Lincang", "临沧市"]],
  ["D", 682, 870, "town", ["Lashio", "လားရှိုး"]],
  ["D", 1221, 905, "city", ["Puer", "普洱市"]],
  ["D", 404, 1007, "big", ["Mandalay", "မန္တလေး"]],
  ["D", 475, 1171, "myanmar", ["Myanmar", "(Burma)"]],
  ["D", 1192, 1135, "city", ["Xishuangbanna", "Dai Autonomous", "Prefecture", "西双版纳", "傣族自治州"]],
  ["D", 402, 1383, "city", ["Naypyidaw", "နေပြည်တော်"]],
  ["D", 1416, 1347, "town", ["Luang", "Prabang", "ເມືອງຫຼວງພະບາງ"]],
  ["D", 1010, 1449, "region", ["CHIANG RAI"]],
  ["D", 888, 1507, "city", ["Chiang Mai"]],
  ["D", 1478, 1492, "country", ["Laos"]],
];

function makeRandom(seed: number) {
  let s = seed;
  return () => ((s = (s * 16807) % 2147483647) / 2147483647);
}

/* Minor roads: a jittered mesh, the same on every load. */
function minorRoads(): { d: string; k: string }[] {
  const rnd = makeRandom(7);
  const step = 44;
  const cols = 58;
  const rows = 16;
  const P = Array.from({ length: rows }, () => Array.from({ length: cols }, () => [0, 0]));
  for (let r = 0; r < rows; r++)
    for (let c = 0; c < cols; c++) P[r][c] = [c * step + (rnd() - 0.5) * 38 - 8, r * step + (rnd() - 0.5) * 38 - 6];
  const out: { d: string; k: string }[] = [];
  const link = (a: number[], b: number[], k: string) => {
    const w = () => (rnd() - 0.5) * 12;
    const at = (t: number) => `${(a[0] + (b[0] - a[0]) * t + w()).toFixed(1)} ${(a[1] + (b[1] - a[1]) * t + w()).toFixed(1)}`;
    out.push({ d: `M${a[0].toFixed(1)} ${a[1].toFixed(1)}L${at(0.3)}L${at(0.65)}L${b[0].toFixed(1)} ${b[1].toFixed(1)}`, k });
  };
  for (let r = 0; r < rows; r++)
    for (let c = 0; c < cols; c++) {
      const x = c * step;
      const y = r * step;
      const sparse = (x < 560 && y < 300) || (x > 1960 && x < 2260) || (x > 1400 && x < 1980 && y < 90);
      const p = sparse ? 0.14 : x > 1960 ? 0.38 : 0.66;
      if (c + 1 < cols && rnd() < p) link(P[r][c], P[r][c + 1], `h${r}-${c}`);
      if (r + 1 < rows && rnd() < p) link(P[r][c], P[r + 1][c], `v${r}-${c}`);
      if (!sparse && c + 1 < cols && r + 1 < rows && rnd() < 0.22) link(P[r][c], P[r + 1][c + 1], `d${r}-${c}`);
    }
  return out;
}
const MESH = minorRoads();

/* Small patches of vegetation and bare ground that break up the large areas. */
function groundPatches(): { pts: string; fill: string }[] {
  const rnd = makeRandom(41);
  const out: { pts: string; fill: string }[] = [];
  for (let i = 0; i < 420; i++) {
    const x = 520 + rnd() * 1990;
    const y = rnd() * 654;
    const hills = x > 1900 || (x > 1100 && y < 110);
    const west = x < 960;
    const tones = hills ? [LIGHT, MID, "#98c1a2", DARK] : west ? [CREAM, LIGHT, MID, LIGHT] : [MID, LIGHT, DARK, MID, CREAM];
    const fill = tones[Math.floor(rnd() * tones.length)];
    const size = (fill === CREAM ? 5 : 8) + rnd() * 16;
    const lean = rnd() * Math.PI;
    const n = 9;
    const pts = Array.from({ length: n }, (_, j) => {
      const a = (j / n) * Math.PI * 2;
      const q = size * (0.55 + rnd() * 0.8);
      const u = Math.cos(a) * q * 1.6;
      const v = Math.sin(a) * q * 0.6;
      return `${(x + u * Math.cos(lean) - v * Math.sin(lean)).toFixed(1)},${(y + u * Math.sin(lean) + v * Math.cos(lean)).toFixed(1)}`;
    }).join(" ");
    out.push({ pts, fill });
  }
  return out;
}
const PATCHES = groundPatches();

const line = (pts: string) => "M" + pts;

function IndiaMap() {
  return (
    <div className="relative h-[654px] w-[2496px] shrink-0 overflow-hidden rounded-3xl bg-[#bbd7c4] font-['Roboto','Noto_Sans','Noto_Sans_CJK_SC',sans-serif]">
      <svg className="absolute inset-0" width="2496" height="654" viewBox="0 0 2496 654" fill="none">
        {LAND.map(([s, fill, pts], i) => (
          <polygon key={i} points={pts} fill={fill} transform={tf(s)} />
        ))}
        <g opacity="0.6">
          {PATCHES.map((p, i) => (
            <polygon key={i} points={p.pts} fill={p.fill} />
          ))}
        </g>
        <g stroke="#dcca8a" strokeWidth="1.200" opacity="0.9">
          {MESH.map((m) => (
            <path key={m.k} d={m.d} />
          ))}
        </g>
        {DASHED.map(([s, pts], i) => (
          <path key={i} d={line(pts)} transform={tf(s)} stroke="#7c8783" strokeWidth="1.200" strokeDasharray="3 2.500" vectorEffect="non-scaling-stroke" />
        ))}
        {ROADS.map(([s, w, pts], i) => (
          <path key={i} d={line(pts)} transform={tf(s)} stroke="#f0cf80" strokeWidth={w * 0.86} strokeLinejoin="round" vectorEffect="non-scaling-stroke" />
        ))}
        {SEA.map(([s, pts], i) => (
          <polygon key={i} points={pts} fill={WATER} transform={tf(s)} />
        ))}
        <polygon points="980,800 1010,797 1015,812 990,820" fill={CREAM} transform={tf("A")} />
        {RIVERS.map(([s, w, pts], i) => (
          <path key={i} d={line(pts)} transform={tf(s)} stroke={WATER} strokeWidth={w} strokeLinejoin="round" vectorEffect="non-scaling-stroke" />
        ))}
        {BORDERS.map(([s, pts], i) => (
          <path key={i} d={line(pts)} transform={tf(s)} stroke="#6d7276" strokeWidth="1.500" strokeLinejoin="round" vectorEffect="non-scaling-stroke" />
        ))}
        <circle cx={px("B", 259)} cy={py(308)} r="8.500" stroke="#e0624f" strokeWidth="2" strokeDasharray="2 2" />
        {DOTS.map(([s, x, y, k], i) => (
          <g key={i}>
            <circle cx={px(s, x)} cy={py(y)} r={k ? 4.4 : 3.6} fill="#fff" stroke={k ? "#1c1d1f" : "#45484c"} strokeWidth={k ? 1.8 : 1.5} />
            {k === 2 && <circle cx={px(s, x)} cy={py(y)} r="2.400" fill="#1c1d1f" />}
          </g>
        ))}
      </svg>
      {LABELS.map(([s, x, y, kind, lines, align], i) => (
        <div
          key={i}
          className={
            "absolute -translate-x-1/2 whitespace-nowrap text-[#1f2124] [text-shadow:0_0_2px_#fff,0_0_2px_#fff,0_0_3px_#ffffffb0] " +
            KIND[kind] +
            (align === "left" ? " text-left" : align === "right" ? " text-right" : " text-center")
          }
          style={{ left: px(s, x), top: py(y) - HALF[kind] }}
        >
          {lines.map((t, j) => (
            <div key={j} className={/[\u4e00-\u9fff]/.test(t) ? "text-[16.5px] leading-[17.5px] font-normal" : ""}>
              {t}
            </div>
          ))}
        </div>
      ))}
      <div className="absolute top-[586px] left-[1204px] font-['Lato'] text-[30px] leading-[40px] font-medium tracking-[-1.2px] [text-shadow:0_0_2px_#fff,0_0_2px_#fff,0_0_2px_#fff]">
        <span className="text-[#4d84ea]">G</span>
        <span className="text-[#dd5045]">o</span>
        <span className="text-[#f0bd42]">o</span>
        <span className="text-[#4d84ea]">g</span>
        <span className="text-[#57a55b]">l</span>
        <span className="text-[#dd5045]">e</span>
      </div>
      <div className="absolute right-0 bottom-0 flex h-[18px] w-[682px] items-center bg-[#f3f4f4] pl-[5px] text-[14px] leading-[18px] whitespace-nowrap text-[#1a1a1a]">
        <span className="w-[174px]">Map data ©2023 Google</span>
        <span className="w-[52px]">India</span>
        <span className="w-[60px]">Terms</span>
        <span className="w-[66px]">Privacy</span>
        <span className="w-[115px]">Send feedback</span>
        <span className="w-[50px]">200 km</span>
        <span className="mt-0.5 h-2 w-[129px] border-2 border-t-0 border-[#1f1f1f]" />
      </div>
    </div>
  );
}

/* ------------------------------------------------------------------ page */

const CartLogo = () => (
  <svg className="h-[60px] w-[74px]" viewBox="0 0 74 60" fill="none" stroke="#000" strokeWidth="3.800" strokeLinecap="round" strokeLinejoin="round">
    <path d="M2 2h10.500L29.500 39.500h34.500L71 11.500H26M31 21h36.500M34.500 30.500h31M29.500 39.500c-6 3.500-5 10 0 10.500h34" />
    <circle cx="33.500" cy="54.500" r="4" strokeWidth="2.600" />
    <circle cx="57.500" cy="54.500" r="4" strokeWidth="2.600" />
  </svg>
);

const Chevron = () => (
  <svg className="h-5 w-3" viewBox="0 0 12 20" fill="none" stroke="#111" strokeWidth="2.800" strokeLinecap="round" strokeLinejoin="round">
    <path d="M2 2l8 8-8 8" />
  </svg>
);

export default function App() {
  return (
    <div className="flex h-[1800px] w-full flex-col overflow-hidden bg-white font-['Inter',sans-serif]">
      <Browser />
      <div className="flex h-20 shrink-0 items-center justify-center bg-[#4e46dc] text-[28px] font-medium tracking-[-0.2px] text-white">
        Get free delivery on orders over $100
      </div>
      <nav className="flex h-[136px] shrink-0 items-center border-b-8 border-gray-200 pr-[224px] pl-[232px] text-[28px] font-medium text-[#374151]">
        <CartLogo />
        <div className="ml-[78px] flex gap-16 tracking-[-0.45px]">
          <span>Women</span>
          <span>Men</span>
          <span>About</span>
          <span>Contact</span>
        </div>
        <div className="ml-auto flex items-center tracking-[-0.25px]">
          <span>Sign in</span>
          <span className="mx-12 h-12 w-0.5 bg-gray-200" />
          <span>Create account</span>
          <svg className="ml-[67px] size-[42px]" viewBox="0 0 42 42" fill="none" stroke="#9ca3af" strokeWidth="3" strokeLinecap="round">
            <circle cx="18" cy="18" r="15.500" />
            <path d="M29.500 29.500l10 10" />
          </svg>
          <svg className="ml-[71px] h-[44px] w-10" viewBox="0 0 40 44" fill="none" stroke="#9ca3af" strokeWidth="3" strokeLinecap="round" strokeLinejoin="round">
            <path d="M6 13h28q1.500 0 1.700 1.500L38.500 40q.2 2.200-2 2.200h-33q-2.200 0-2-2.200L4.300 14.500Q4.500 13 6 13z" />
            <path d="M12.500 19.500V10q0-8 7.500-8t7.500 8v9.500" />
            <circle cx="12.500" cy="19.500" r="1" />
            <circle cx="27.500" cy="19.500" r="1" />
          </svg>
          <span className="ml-5">0</span>
        </div>
      </nav>
      <main className="flex flex-1 flex-col rounded-t-[16px] bg-[#f3f4f6] pl-48">
        <div className="ml-[18px] flex h-[104px] items-center text-[28px] font-medium tracking-[-0.3px] text-[#1f2937]">
          <svg className="-mt-2 h-[30px] w-7" viewBox="0 0 28 30" fill="none" stroke="#1f2937" strokeWidth="2.400" strokeLinejoin="round">
            <path d="M1.500 11L14 1.500 26.500 11v15.500q0 2-2 2h-21q-2 0-2-2z" />
            <path d="M9.500 28V14.500h9V28" />
          </svg>
          <span className="ml-[34px]">Home</span>
          <span className="ml-[34px] flex">
            <Chevron />
          </span>
          <span className="ml-[27px]">About</span>
          <span className="ml-[33px] flex">
            <Chevron />
          </span>
        </div>
        <div className="mt-48 flex h-[60px] w-[314px] items-center justify-center rounded-full border-2 border-gray-200 bg-gray-50 text-[28px] font-semibold whitespace-nowrap text-black">
          About the company
        </div>
        <h1 className="mt-[58px] h-24 text-[96px] leading-[96px] font-bold tracking-[-3.25px] whitespace-nowrap text-[#111827]">
          Made with love, right here in India
        </h1>
        <p className="mt-[55px] h-[112px] text-[40px] leading-[56px] tracking-[-1.5px] whitespace-nowrap text-[#4b5563]">
          Lorem ipsum dolor sit amet consectetur adipisicing elit. Tempore veritatis voluptates neque itaque
          <br />
          repudiandae sint, explicabo assumenda quam ratione placeat?
        </p>
        <div className="mt-[79px]">
          <IndiaMap />
        </div>
      </main>
    </div>
  );
}
